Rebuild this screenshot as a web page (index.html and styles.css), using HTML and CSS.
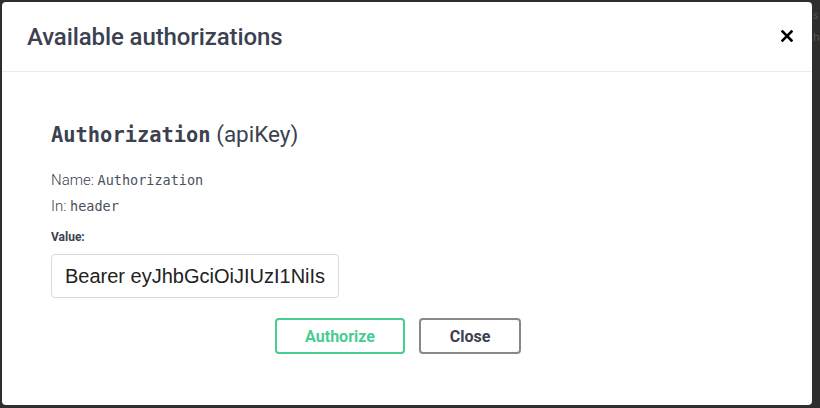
FILE: index.html
```html
<!DOCTYPE html>
<html lang="en">
<head>
<meta charset="utf-8">
<title>Available authorizations</title>
<link rel="stylesheet" href="styles.css">
</head>
<body>
<div class="stage">
  <div class="modal">
    <div class="modal-header">
      <h3 class="modal-title">Available authorizations</h3>
      <button class="close-x" aria-label="Close">
        <svg width="12" height="12" viewBox="0 0 12 12"><path d="M1.5 1.5 L10.5 10.5 M10.5 1.5 L1.5 10.5" stroke="#000" stroke-width="2.6" stroke-linecap="square"/></svg>
      </button>
    </div>
    <div class="modal-body">
      <h4 class="auth-title"><code>Authorization</code>&nbsp;(apiKey)</h4>
      <p class="meta">Name: <code>Authorization</code></p>
      <p class="meta">In: <code>header</code></p>
      <label class="value-label" for="tok">Value:</label>
      <input id="tok" class="token" type="text" value="Bearer eyJhbGciOiJIUzI1NiIsInR5cCI6IkpXVCJ9">
      <div class="btn-row">
        <button class="btn btn-auth">Authorize</button>
        <button class="btn btn-close">Close</button>
      </div>
    </div>
  </div>
  <div class="gutter">
    <span>s</span>
    <span>h</span>
  </div>
</div>
</body>
</html>
```

FILE: styles.css
```css
html, body {
  margin: 0;
  padding: 0;
  background: #2e2e2e;
  height: 408px;
  overflow: hidden;
}
.stage {
  display: flex;
  padding: 2px 0 3px 2px;
  height: 408px;
  box-sizing: border-box;
}
.modal {
  width: 810px;
  flex: none;
  background: #fff;
  border-radius: 4px;
  box-sizing: border-box;
  font-family: "Roboto", "Open Sans", sans-serif;
  color: #3b4151;
}
.gutter {
  flex: 1;
  overflow: hidden;
  display: flex;
  flex-direction: column;
  font-family: "Open Sans", sans-serif;
  font-size: 11px;
  color: #5a5a5a;
  line-height: 22px;
  padding-top: 2px;
  padding-left: 1px;
}
.modal-header {
  height: 69px;
  border-bottom: 1px solid #ebebeb;
  display: flex;
  align-items: center;
  justify-content: space-between;
  padding: 0 19px 0 25px;
}
.modal-title {
  margin: 0;
  font-size: 24px;
  font-weight: 500;
  letter-spacing: -0.1px;
  color: #3b4151;
}
.close-x {
  border: 0;
  background: none;
  padding: 0;
  width: 12px;
  height: 12px;
  display: flex;
  margin-bottom: 2px;
}
.modal-body {
  padding: 50px 0 0 49px;
}
.auth-title {
  margin: 0;
  font-size: 22.5px;
  line-height: 24px;
  font-weight: 400;
}
.auth-title code {
  font-family: "DejaVu Sans Mono", monospace;
  font-weight: 700;
  font-size: 20.4px;
}
.meta {
  margin: 0;
  font-size: 15px;
  font-weight: 300;
  line-height: 26px;
  color: #3b4151;
}
.auth-title + .meta {
  margin-top: 20px;
}
.meta code {
  font-family: "DejaVu Sans Mono", monospace;
  font-size: 13.5px;
  font-weight: 400;
  color: #4a505e;
}
.value-label {
  display: block;
  font-size: 12px;
  font-weight: 700;
  margin-top: 10px;
  line-height: 16px;
}
.token {
  display: block;
  margin-top: 9px;
  width: 288px;
  height: 44px;
  box-sizing: border-box;
  border: 1px solid #d9d9d9;
  border-radius: 4px;
  padding: 0 13px 0 13px;
  font-family: "Liberation Sans", Arial, sans-serif;
  font-size: 20px;
  color: #222;
  background: #fff;
  outline: none;
}
.btn-row {
  display: flex;
  justify-content: center;
  gap: 14px;
  margin-top: 20px;
  padding-right: 67px;
}
.btn {
  height: 36px;
  box-sizing: border-box;
  border-radius: 4px;
  background: #fff;
  font-family: "Roboto", "Open Sans", sans-serif;
  font-size: 16px;
  font-weight: 700;
  padding: 0;
}
.btn-auth {
  width: 130px;
  border: 2px solid #49cc90;
  color: #49cc90;
}
.btn-close {
  width: 102px;
  border: 2px solid #888;
  color: #3b4151;
}
```
